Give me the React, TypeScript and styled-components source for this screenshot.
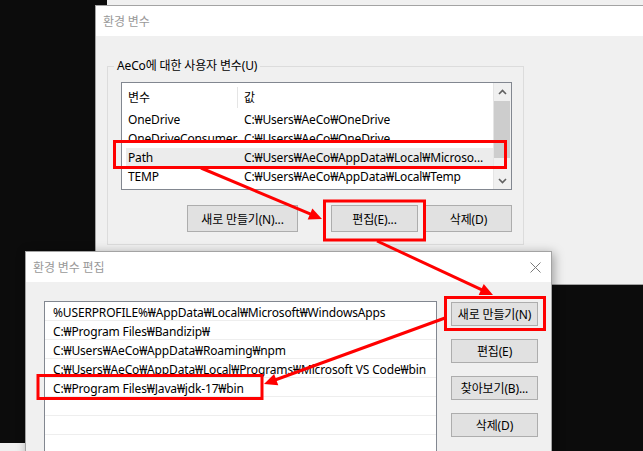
import styled, { createGlobalStyle } from "styled-components";

const GlobalStyle = createGlobalStyle`
  html, body {
    margin: 0;
    padding: 0;
    background: #0c0c0c;
    overflow: hidden;
  }
  * {
    box-sizing: border-box;
  }
`;

const Desktop = styled.div`
  position: relative;
  width: 643px;
  height: 451px;
  overflow: hidden;
  background: #0c0c0c;
  font-family: "Noto Sans", "Noto Sans CJK KR", sans-serif;
  font-size: 12px;
  letter-spacing: -0.15px;
  color: #000;
`;

// windows sit on the desktop at their own spot
const Window = styled.div<{ $x: number; $y: number; $w: number; $h: number; $shadow?: boolean }>`
  position: absolute;
  left: ${(p) => p.$x}px;
  top: ${(p) => p.$y}px;
  width: ${(p) => p.$w}px;
  height: ${(p) => p.$h}px;
  background: #f0f0f0;
  border: 1px solid #a3a3a3;
  display: flex;
  flex-direction: column;
  box-shadow: ${(p) => (p.$shadow ? "2px 2px 10px rgba(0, 0, 0, 0.35)" : "none")};
`;

const TitleBar = styled.div`
  height: 30px;
  flex-shrink: 0;
  background: #fff;
  display: flex;
  align-items: center;
  justify-content: space-between;
  padding: 0 10px 0 7px;
  color: #999;
  font-size: 12px;
`;

const CloseIcon = styled.svg`
  width: 11px;
  height: 11px;
`;

const EnvBody = styled.div`
  flex: 1;
  padding: 30px 0 0 11px;
`;

const GroupBox = styled.div`
  position: relative;
  width: 417px;
  height: 179px;
  border: 1px solid #dcdcdc;
  padding: 15px 0 0 13px;
`;

const Legend = styled.span`
  position: absolute;
  left: 6px;
  top: -10px;
  padding: 0 3px;
  background: #f0f0f0;
  line-height: 18px;
`;

const ListView = styled.div`
  width: 391px;
  height: 108px;
  background: #fff;
  border: 1px solid #828790;
  display: flex;
  overflow: hidden;
`;

const ListContent = styled.div`
  flex: 1;
  display: flex;
  flex-direction: column;
  border-right: 1px solid #e5e5e5;
  overflow: hidden;
`;

const HeaderRow = styled.div`
  height: 27px;
  flex-shrink: 0;
  display: flex;
  align-items: center;
  padding: 1px 0 0 4px;
`;

const HeaderCell = styled.div<{ $w?: number; $sep?: boolean }>`
  width: ${(p) => (p.$w ? `${p.$w}px` : "auto")};
  flex: ${(p) => (p.$w ? "none" : 1)};
  height: 21px;
  display: flex;
  align-items: center;
  padding-left: ${(p) => (p.$sep ? 2 : 6)}px;
  border-right: ${(p) => (p.$sep ? "1px solid #e5e5e5" : "none")};
`;

const VarRow = styled.div<{ $selected?: boolean }>`
  height: 19px;
  flex-shrink: 0;
  display: flex;
  align-items: center;
  margin-left: 4px;
  background: ${(p) => (p.$selected ? "#ececec" : "transparent")};
  white-space: nowrap;
`;

const VarCell = styled.div<{ $w?: number }>`
  width: ${(p) => (p.$w ? `${p.$w}px` : "auto")};
  flex: ${(p) => (p.$w ? "none" : 1)};
  padding-left: ${(p) => (p.$w ? 2 : 6)}px;
  white-space: nowrap;
  overflow: ${(p) => (p.$w ? "visible" : "hidden")};
`;

const ScrollBar = styled.div`
  width: 17px;
  flex-shrink: 0;
  background: #f0f0f0;
  display: flex;
  flex-direction: column;
`;

const ScrollArrow = styled.div`
  height: 17px;
  display: flex;
  align-items: center;
  justify-content: center;
`;

const ScrollTrack = styled.div`
  flex: 1;
  padding: 1px 1px 0 0;
`;

const Thumb = styled.div`
  height: 57px;
  background: #cdcdcd;
`;

const ButtonRow = styled.div`
  width: 391px;
  margin-top: 15px;
  display: flex;
  justify-content: flex-end;
  gap: 7px;
`;

const WinButton = styled.button<{ $w: number; $h: number; $gapRight?: number }>`
  width: ${(p) => p.$w}px;
  height: ${(p) => p.$h}px;
  margin: 0 ${(p) => p.$gapRight ?? 0}px 0 0;
  padding: 0;
  background: #e1e1e1;
  border: 1px solid #adadad;
  font-family: inherit;
  font-size: 12px;
  letter-spacing: inherit;
  color: #000;
  display: flex;
  align-items: center;
  justify-content: center;
`;

const EditBody = styled.div`
  flex: 1;
  display: flex;
  gap: 14px;
  padding: 19px 0 0 18px;
`;

const PathList = styled.div`
  width: 393px;
  height: 200px;
  background: #fff;
  border: 1px solid #828790;
  display: flex;
  flex-direction: column;
`;

const PathRow = styled.div`
  height: 19px;
  flex-shrink: 0;
  border-bottom: 1px solid #eeeeee;
  display: flex;
  align-items: center;
  padding: 2px 0 0 8px;
  white-space: nowrap;
  overflow: hidden;
`;

const ButtonColumn = styled.div`
  display: flex;
  flex-direction: column;
  gap: 13px;
  padding-top: 1px;
`;

const BackWindow = styled.div<{ $x: number; $y: number; $w: number; $h: number }>`
  position: absolute;
  left: ${(p) => p.$x}px;
  top: ${(p) => p.$y}px;
  width: ${(p) => p.$w}px;
  height: ${(p) => p.$h}px;
  background: #f0f0f0;
`;

const Annotations = styled.svg`
  position: absolute;
  left: 0;
  top: 0;
  width: 643px;
  height: 451px;
  pointer-events: none;
`;

const variables = [
  { name: "OneDrive", value: "C:₩Users₩AeCo₩OneDrive" },
  { name: "OneDriveConsumer", value: "C:₩Users₩AeCo₩OneDrive" },
  { name: "Path", value: "C:₩Users₩AeCo₩AppData₩Local₩Microso...", selected: true },
  { name: "TEMP", value: "C:₩Users₩AeCo₩AppData₩Local₩Temp" },
];

const paths = [
  "%USERPROFILE%₩AppData₩Local₩Microsoft₩WindowsApps",
  "C:₩Program Files₩Bandizip₩",
  "C:₩Users₩AeCo₩AppData₩Roaming₩npm",
  "C:₩Users₩AeCo₩AppData₩Local₩Programs₩Microsoft VS Code₩bin",
  "C:₩Program Files₩Java₩jdk-17₩bin",
  "",
  "",
  "",
  "",
];

const Chevron = ({ up }: { up?: boolean }) => (
  <svg width="9" height="6" viewBox="0 0 9 6">
    <polyline
      points={up ? "1,5 4.5,1.5 8,5" : "1,1 4.5,4.5 8,1"}
      fill="none"
      stroke="#606060"
      strokeWidth="1.6"
    />
  </svg>
);

const Arrow = ({ x1, y1, x2, y2 }: { x1: number; y1: number; x2: number; y2: number }) => {
  const dx = x2 - x1;
  const dy = y2 - y1;
  const len = Math.hypot(dx, dy);
  const ux = dx / len;
  const uy = dy / len;
  const bx = x2 - ux * 13;
  const by = y2 - uy * 13;
  const px = -uy * 6;
  const py = ux * 6;
  return (
    <g fill="#ff0000" stroke="#ff0000">
      <line x1={x1} y1={y1} x2={bx + ux * 2} y2={by + uy * 2} strokeWidth="3" />
      <polygon points={`${x2},${y2} ${bx + px},${by + py} ${bx - px},${by - py}`} stroke="none" />
    </g>
  );
};

export default function App() {
  return (
    <Desktop>
      <GlobalStyle />
      <BackWindow $x={107} $y={-100} $w={600} $h={105} />
      <BackWindow $x={-100} $y={443} $w={130} $h={40} />

      <Window $x={95} $y={5} $w={580} $h={280}>
        <TitleBar>환경 변수</TitleBar>
        <EnvBody>
          <GroupBox>
            <Legend>AeCo에 대한 사용자 변수(U)</Legend>
            <ListView>
              <ListContent>
                <HeaderRow>
                  <HeaderCell $w={112} $sep>
                    변수
                  </HeaderCell>
                  <HeaderCell>값</HeaderCell>
                </HeaderRow>
                {variables.map((v) => (
                  <VarRow key={v.name} $selected={v.selected}>
                    <VarCell $w={112}>{v.name}</VarCell>
                    <VarCell>{v.value}</VarCell>
                  </VarRow>
                ))}
              </ListContent>
              <ScrollBar>
                <ScrollArrow>
                  <Chevron up />
                </ScrollArrow>
                <ScrollTrack>
                  <Thumb />
                </ScrollTrack>
                <ScrollArrow>
                  <Chevron />
                </ScrollArrow>
              </ScrollBar>
            </ListView>
            <ButtonRow>
              <WinButton $w={111} $h={27} $gapRight={26}>
                새로 만들기(N)...
              </WinButton>
              <WinButton $w={87} $h={27}>
                편집(E)...
              </WinButton>
              <WinButton $w={87} $h={27}>
                삭제(D)
              </WinButton>
            </ButtonRow>
          </GroupBox>
        </EnvBody>
      </Window>

      <Window $x={25} $y={251} $w={527} $h={240} $shadow>
        <TitleBar>
          <span>환경 변수 편집</span>
          <CloseIcon viewBox="0 0 11 11">
            <path d="M0.5 0.5 L10.5 10.5 M10.5 0.5 L0.5 10.5" stroke="#7a7a7a" strokeWidth="1" />
          </CloseIcon>
        </TitleBar>
        <EditBody>
          <PathList>
            {paths.map((p, i) => (
              <PathRow key={i}>{p}</PathRow>
            ))}
          </PathList>
          <ButtonColumn>
            <WinButton $w={87} $h={24}>
              새로 만들기(N)
            </WinButton>
            <WinButton $w={87} $h={24}>
              편집(E)
            </WinButton>
            <WinButton $w={87} $h={24}>
              찾아보기(B)...
            </WinButton>
            <WinButton $w={87} $h={24}>
              삭제(D)
            </WinButton>
          </ButtonColumn>
        </EditBody>
      </Window>

      <Annotations viewBox="0 0 643 451">
        <g fill="none" stroke="#ff0000" strokeWidth="3">
          <rect x={114.5} y={141.5} width={391} height={26} />
          <rect x={324.5} y={201} width={100} height={39} />
          <rect x={445.5} y={297.5} width={99} height={32} />
          <rect x={38} y={375.5} width={224} height={23} />
        </g>
        <Arrow x1={201} y1={168} x2={322} y2={219} />
        <Arrow x1={377} y1={241} x2={493} y2={295} />
        <Arrow x1={445} y1={318} x2={264} y2={384} />
      </Annotations>
    </Desktop>
  );
}
